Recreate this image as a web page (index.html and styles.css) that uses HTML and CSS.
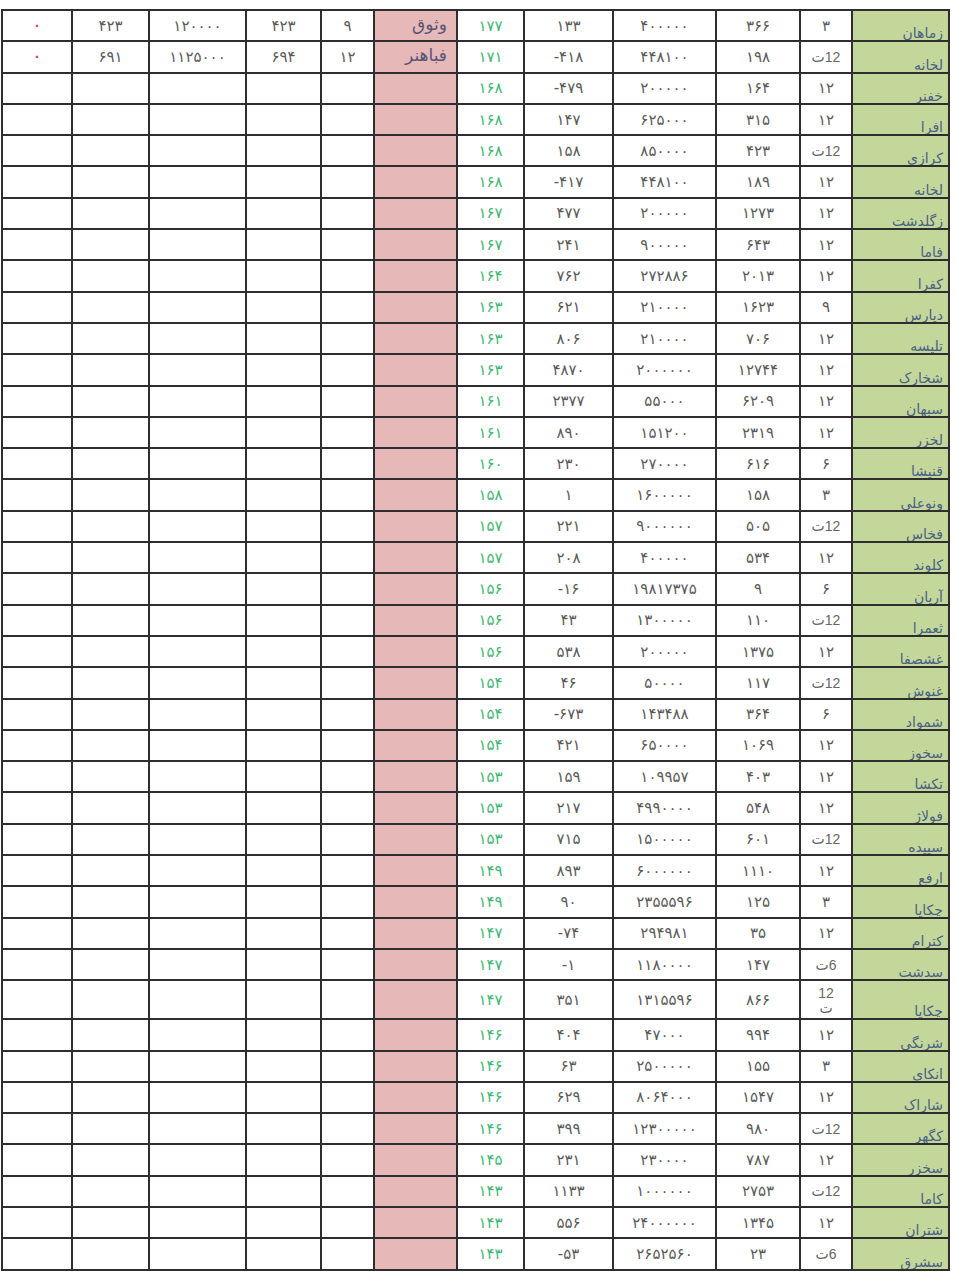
FILE: index.html
```html
<!DOCTYPE html>
<html lang="fa">
<head>
<meta charset="utf-8">
<title>جدول</title>
<link rel="stylesheet" href="styles.css">
</head>
<body>
<table class="sheet" dir="rtl">
<colgroup>
<col class="w-name"><col class="w-c2"><col class="w-c3"><col class="w-c4"><col class="w-c5"><col class="w-c6"><col class="w-p"><col class="w-c8"><col class="w-c9"><col class="w-c10"><col class="w-c11"><col class="w-c12">
</colgroup>
<tbody>
<tr><td class="name">زماهان</td><td class="n">۳</td><td class="n">۳۶۶</td><td class="n">۴۰۰۰۰۰</td><td class="n">۱۳۳</td><td class="g">۱۷۷</td><td class="p">وثوق</td><td class="n">۹</td><td class="n">۴۲۳</td><td class="n">۱۲۰۰۰۰</td><td class="n">۴۲۳</td><td class="z">۰</td></tr>
<tr><td class="name">لخانه</td><td class="t">12ت</td><td class="n">۱۹۸</td><td class="n">۴۴۸۱۰۰</td><td class="n">-۴۱۸</td><td class="g">۱۷۱</td><td class="p">فباهنر</td><td class="n">۱۲</td><td class="n">۶۹۴</td><td class="n">۱۱۲۵۰۰۰</td><td class="n">۶۹۱</td><td class="z">۰</td></tr>
<tr><td class="name">خفنر</td><td class="n">۱۲</td><td class="n">۱۶۴</td><td class="n">۲۰۰۰۰۰</td><td class="n">-۴۷۹</td><td class="g">۱۶۸</td><td class="p"></td><td></td><td></td><td></td><td></td><td></td></tr>
<tr><td class="name">افرا</td><td class="n">۱۲</td><td class="n">۳۱۵</td><td class="n">۶۲۵۰۰۰</td><td class="n">۱۴۷</td><td class="g">۱۶۸</td><td class="p"></td><td></td><td></td><td></td><td></td><td></td></tr>
<tr><td class="name">کرازی</td><td class="t">12ت</td><td class="n">۴۲۳</td><td class="n">۸۵۰۰۰۰</td><td class="n">۱۵۸</td><td class="g">۱۶۸</td><td class="p"></td><td></td><td></td><td></td><td></td><td></td></tr>
<tr><td class="name">لخانه</td><td class="n">۱۲</td><td class="n">۱۸۹</td><td class="n">۴۴۸۱۰۰</td><td class="n">-۴۱۷</td><td class="g">۱۶۸</td><td class="p"></td><td></td><td></td><td></td><td></td><td></td></tr>
<tr><td class="name">زگلدشت</td><td class="n">۱۲</td><td class="n">۱۲۷۳</td><td class="n">۲۰۰۰۰۰</td><td class="n">۴۷۷</td><td class="g">۱۶۷</td><td class="p"></td><td></td><td></td><td></td><td></td><td></td></tr>
<tr><td class="name">فاما</td><td class="n">۱۲</td><td class="n">۶۴۳</td><td class="n">۹۰۰۰۰۰</td><td class="n">۲۴۱</td><td class="g">۱۶۷</td><td class="p"></td><td></td><td></td><td></td><td></td><td></td></tr>
<tr><td class="name">کفرا</td><td class="n">۱۲</td><td class="n">۲۰۱۳</td><td class="n">۲۷۲۸۸۶</td><td class="n">۷۶۲</td><td class="g">۱۶۴</td><td class="p"></td><td></td><td></td><td></td><td></td><td></td></tr>
<tr><td class="name">دیارس</td><td class="n">۹</td><td class="n">۱۶۲۳</td><td class="n">۲۱۰۰۰۰</td><td class="n">۶۲۱</td><td class="g">۱۶۳</td><td class="p"></td><td></td><td></td><td></td><td></td><td></td></tr>
<tr><td class="name">تلیسه</td><td class="n">۱۲</td><td class="n">۷۰۶</td><td class="n">۲۱۰۰۰۰</td><td class="n">۸۰۶</td><td class="g">۱۶۳</td><td class="p"></td><td></td><td></td><td></td><td></td><td></td></tr>
<tr><td class="name">شخارک</td><td class="n">۱۲</td><td class="n">۱۲۷۴۴</td><td class="n">۲۰۰۰۰۰۰</td><td class="n">۴۸۷۰</td><td class="g">۱۶۳</td><td class="p"></td><td></td><td></td><td></td><td></td><td></td></tr>
<tr><td class="name">سبهان</td><td class="n">۱۲</td><td class="n">۶۲۰۹</td><td class="n">۵۵۰۰۰</td><td class="n">۲۳۷۷</td><td class="g">۱۶۱</td><td class="p"></td><td></td><td></td><td></td><td></td><td></td></tr>
<tr><td class="name">لخزر</td><td class="n">۱۲</td><td class="n">۲۳۱۹</td><td class="n">۱۵۱۲۰۰</td><td class="n">۸۹۰</td><td class="g">۱۶۱</td><td class="p"></td><td></td><td></td><td></td><td></td><td></td></tr>
<tr><td class="name">قنیشا</td><td class="n">۶</td><td class="n">۶۱۶</td><td class="n">۲۷۰۰۰۰</td><td class="n">۲۳۰</td><td class="g">۱۶۰</td><td class="p"></td><td></td><td></td><td></td><td></td><td></td></tr>
<tr><td class="name">ونوعلي</td><td class="n">۳</td><td class="n">۱۵۸</td><td class="n">۱۶۰۰۰۰۰</td><td class="n">۱</td><td class="g">۱۵۸</td><td class="p"></td><td></td><td></td><td></td><td></td><td></td></tr>
<tr><td class="name">فخاس</td><td class="t">12ت</td><td class="n">۵۰۵</td><td class="n">۹۰۰۰۰۰۰</td><td class="n">۲۲۱</td><td class="g">۱۵۷</td><td class="p"></td><td></td><td></td><td></td><td></td><td></td></tr>
<tr><td class="name">کلوند</td><td class="n">۱۲</td><td class="n">۵۳۴</td><td class="n">۴۰۰۰۰۰</td><td class="n">۲۰۸</td><td class="g">۱۵۷</td><td class="p"></td><td></td><td></td><td></td><td></td><td></td></tr>
<tr><td class="name">آریان</td><td class="n">۶</td><td class="n">۹</td><td class="n">۱۹۸۱۷۳۷۵</td><td class="n">-۱۶</td><td class="g">۱۵۶</td><td class="p"></td><td></td><td></td><td></td><td></td><td></td></tr>
<tr><td class="name">ثعمرا</td><td class="t">12ت</td><td class="n">۱۱۰</td><td class="n">۱۳۰۰۰۰۰</td><td class="n">۴۳</td><td class="g">۱۵۶</td><td class="p"></td><td></td><td></td><td></td><td></td><td></td></tr>
<tr><td class="name">غشصفا</td><td class="n">۱۲</td><td class="n">۱۳۷۵</td><td class="n">۲۰۰۰۰۰</td><td class="n">۵۳۸</td><td class="g">۱۵۶</td><td class="p"></td><td></td><td></td><td></td><td></td><td></td></tr>
<tr><td class="name">غنوش</td><td class="t">12ت</td><td class="n">۱۱۷</td><td class="n">۵۰۰۰۰</td><td class="n">۴۶</td><td class="g">۱۵۴</td><td class="p"></td><td></td><td></td><td></td><td></td><td></td></tr>
<tr><td class="name">شمواد</td><td class="n">۶</td><td class="n">۳۶۴</td><td class="n">۱۴۳۴۸۸</td><td class="n">-۶۷۳</td><td class="g">۱۵۴</td><td class="p"></td><td></td><td></td><td></td><td></td><td></td></tr>
<tr><td class="name">سخوز</td><td class="n">۱۲</td><td class="n">۱۰۶۹</td><td class="n">۶۵۰۰۰۰</td><td class="n">۴۲۱</td><td class="g">۱۵۴</td><td class="p"></td><td></td><td></td><td></td><td></td><td></td></tr>
<tr><td class="name">تکشا</td><td class="n">۱۲</td><td class="n">۴۰۳</td><td class="n">۱۰۹۹۵۷</td><td class="n">۱۵۹</td><td class="g">۱۵۳</td><td class="p"></td><td></td><td></td><td></td><td></td><td></td></tr>
<tr><td class="name">فولاژ</td><td class="n">۱۲</td><td class="n">۵۴۸</td><td class="n">۴۹۹۰۰۰۰</td><td class="n">۲۱۷</td><td class="g">۱۵۳</td><td class="p"></td><td></td><td></td><td></td><td></td><td></td></tr>
<tr><td class="name">سپیده</td><td class="t">12ت</td><td class="n">۶۰۱</td><td class="n">۱۵۰۰۰۰۰</td><td class="n">۷۱۵</td><td class="g">۱۵۳</td><td class="p"></td><td></td><td></td><td></td><td></td><td></td></tr>
<tr><td class="name">ارفع</td><td class="n">۱۲</td><td class="n">۱۱۱۰</td><td class="n">۶۰۰۰۰۰۰</td><td class="n">۸۹۳</td><td class="g">۱۴۹</td><td class="p"></td><td></td><td></td><td></td><td></td><td></td></tr>
<tr><td class="name">چکاپا</td><td class="n">۳</td><td class="n">۱۲۵</td><td class="n">۲۳۵۵۵۹۶</td><td class="n">۹۰</td><td class="g">۱۴۹</td><td class="p"></td><td></td><td></td><td></td><td></td><td></td></tr>
<tr><td class="name">کترام</td><td class="n">۱۲</td><td class="n">۳۵</td><td class="n">۲۹۴۹۸۱</td><td class="n">-۷۴</td><td class="g">۱۴۷</td><td class="p"></td><td></td><td></td><td></td><td></td><td></td></tr>
<tr><td class="name">سدشت</td><td class="t">6ت</td><td class="n">۱۴۷</td><td class="n">۱۱۸۰۰۰۰</td><td class="n">-۱</td><td class="g">۱۴۷</td><td class="p"></td><td></td><td></td><td></td><td></td><td></td></tr>
<tr class="tall"><td class="name">چکاپا</td><td class="t wrap">12 ت</td><td class="n">۸۶۶</td><td class="n">۱۳۱۵۵۹۶</td><td class="n">۳۵۱</td><td class="g">۱۴۷</td><td class="p"></td><td></td><td></td><td></td><td></td><td></td></tr>
<tr><td class="name">شرنگي</td><td class="n">۱۲</td><td class="n">۹۹۴</td><td class="n">۴۷۰۰۰</td><td class="n">۴۰۴</td><td class="g">۱۴۶</td><td class="p"></td><td></td><td></td><td></td><td></td><td></td></tr>
<tr><td class="name">انکاي</td><td class="n">۳</td><td class="n">۱۵۵</td><td class="n">۲۵۰۰۰۰۰</td><td class="n">۶۳</td><td class="g">۱۴۶</td><td class="p"></td><td></td><td></td><td></td><td></td><td></td></tr>
<tr><td class="name">شاراک</td><td class="n">۱۲</td><td class="n">۱۵۴۷</td><td class="n">۸۰۶۴۰۰۰</td><td class="n">۶۲۹</td><td class="g">۱۴۶</td><td class="p"></td><td></td><td></td><td></td><td></td><td></td></tr>
<tr><td class="name">کگهر</td><td class="t">12ت</td><td class="n">۹۸۰</td><td class="n">۱۲۳۰۰۰۰۰</td><td class="n">۳۹۹</td><td class="g">۱۴۶</td><td class="p"></td><td></td><td></td><td></td><td></td><td></td></tr>
<tr><td class="name">سخزر</td><td class="n">۱۲</td><td class="n">۷۸۷</td><td class="n">۲۳۰۰۰۰</td><td class="n">۲۳۱</td><td class="g">۱۴۵</td><td class="p"></td><td></td><td></td><td></td><td></td><td></td></tr>
<tr><td class="name">کاما</td><td class="t">12ت</td><td class="n">۲۷۵۳</td><td class="n">۱۰۰۰۰۰۰</td><td class="n">۱۱۳۳</td><td class="g">۱۴۳</td><td class="p"></td><td></td><td></td><td></td><td></td><td></td></tr>
<tr><td class="name">شتران</td><td class="n">۱۲</td><td class="n">۱۳۴۵</td><td class="n">۲۴۰۰۰۰۰۰</td><td class="n">۵۵۶</td><td class="g">۱۴۳</td><td class="p"></td><td></td><td></td><td></td><td></td><td></td></tr>
<tr><td class="name">سشرق</td><td class="t">6ت</td><td class="n">۲۳</td><td class="n">۲۶۵۲۵۶۰</td><td class="n">-۵۳</td><td class="g">۱۴۳</td><td class="p"></td><td></td><td></td><td></td><td></td><td></td></tr>
</tbody>
</table>
</body>
</html>
```
FILE: styles.css
```css
html, body {
  margin: 0;
  padding: 0;
  background: #ffffff;
}

body {
  font-family: "DejaVu Sans", "Noto Sans", sans-serif;
  color: #555555;
}

.sheet {
  border-collapse: collapse;
  table-layout: fixed;
  width: 949px;
  margin: 9px 0 0 1px;
}

.w-name { width: 97px; }
.w-c2 { width: 52px; }
.w-c3 { width: 84px; }
.w-c4 { width: 103px; }
.w-c5 { width: 89px; }
.w-c6 { width: 67px; }
.w-p { width: 83px; }
.w-c8 { width: 53px; }
.w-c9 { width: 75px; }
.w-c10 { width: 97px; }
.w-c11 { width: 77px; }
.w-c12 { width: 70px; }

.sheet tr {
  height: 31.3px;
}

.sheet tr.tall {
  height: 39px;
}

.sheet td {
  border: 2px solid #2e2e2e;
  padding: 0;
  text-align: center;
  vertical-align: middle;
  font-size: 15px;
  line-height: 16px;
  letter-spacing: 1px;
  color: #5a5a5a;
  overflow: hidden;
  white-space: nowrap;
}

.sheet td.n {
  direction: ltr;
}

.sheet td.t {
  font-family: "Liberation Sans", "DejaVu Sans", sans-serif;
  font-size: 14px;
  letter-spacing: 0;
  color: #666666;
}

.sheet td.wrap {
  white-space: normal;
  line-height: 15px;
  padding: 2px 10px 0;
}

.sheet td.g {
  direction: ltr;
  color: #3fb774;
}

.sheet td.z {
  color: #e0484a;
  font-size: 13px;
  font-weight: bold;
}

.sheet td.name {
  background: #c4d79b;
  color: #4a6184;
  text-align: right;
  vertical-align: bottom;
  padding: 0 5px 0 0;
  font-size: 14px;
  line-height: 14px;
  letter-spacing: 0;
}

.sheet td.p {
  background: #e6b8b7;
  color: #575577;
  text-align: right;
  padding: 0 9px 3px 0;
  font-size: 17px;
  line-height: 19px;
  letter-spacing: 0;
}
```
